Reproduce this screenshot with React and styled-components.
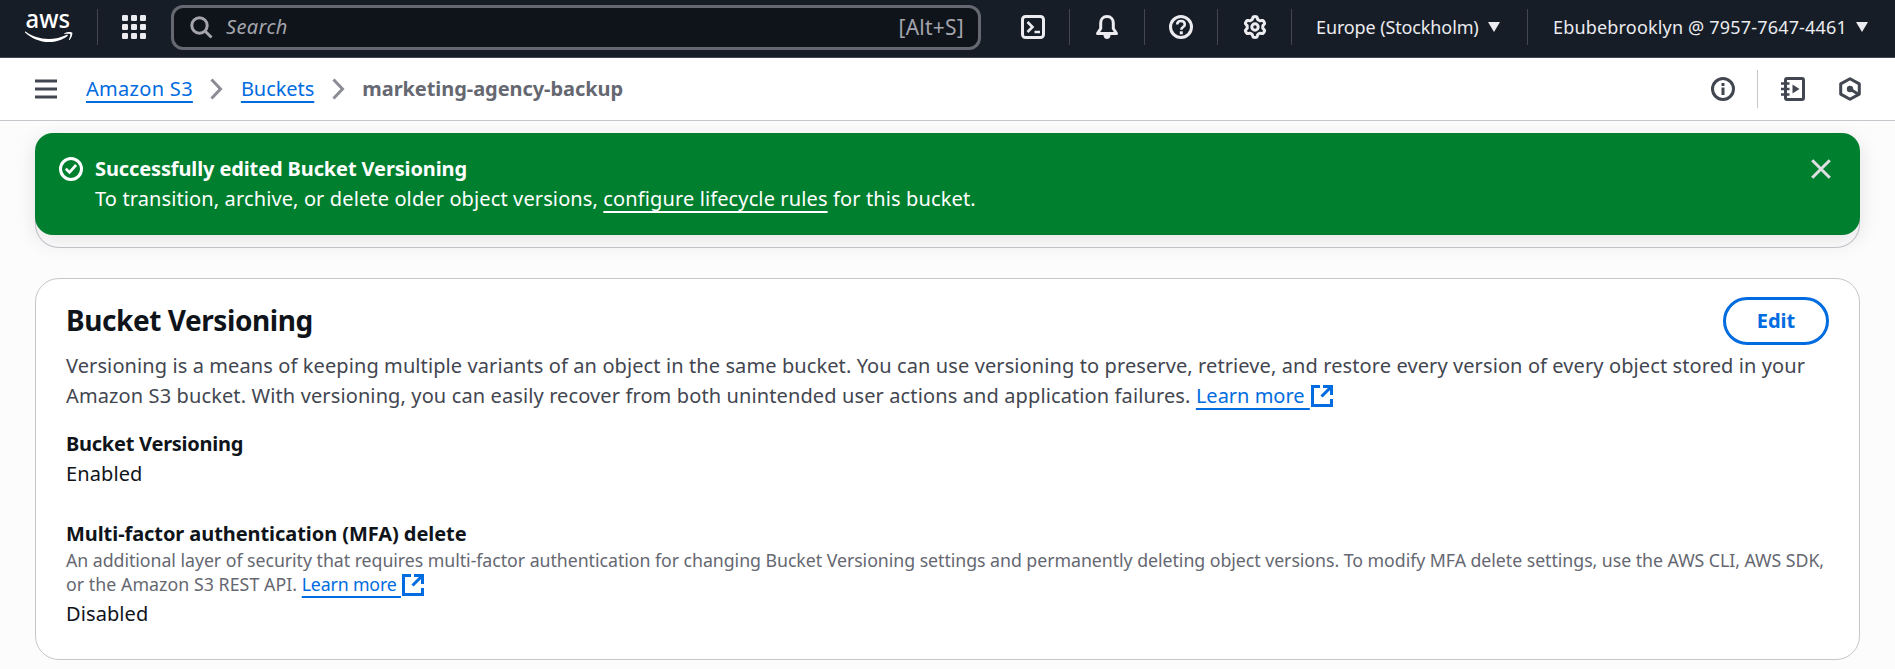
import React from "react";
import styled, { createGlobalStyle } from "styled-components";

const color = {
  navy: "#161d26",
  ink: "#0f141a",
  body: "#424650",
  muted: "#656871",
  line: "#c6c6cd",
  link: "#006ce0",
  light: "#ebebf0",
  page: "#fcfcfd",
  success: "#00802f",
};

const GlobalStyle = createGlobalStyle`
  *, *::before, *::after { box-sizing: border-box; }
  body {
    margin: 0;
    background: ${color.page};
    color: ${color.ink};
    font: 400 20px/30px "Noto Sans", "Open Sans", sans-serif;
    letter-spacing: 0.1px;
    overflow: hidden;
  }
  h2, p { margin: 0; }
  button { font: inherit; color: inherit; background: none; border: 0; padding: 0; }
`;

const Page = styled.div`
  display: flex;
  flex-direction: column;
  height: 669px;
  overflow: hidden;
`;

/* ---------- global navigation ---------- */

const TopNav = styled.header`
  display: flex;
  align-items: flex-start;
  flex: none;
  height: 58px;
  background: ${color.navy};
  border-bottom: 1px solid #424650;
  color: ${color.light};
`;

const NavCell = styled.div`
  display: flex;
  align-items: center;
  justify-content: ${(p) => (p.$start ? "flex-start" : "center")};
  flex: none;
  width: ${(p) => p.$width}px;
  height: 36px;
  margin-top: 9px;
  padding-left: ${(p) => p.$start || 0}px;
  border-right: ${(p) => (p.$last ? "0" : `1px solid #424650`)};
`;

const SearchBox = styled.div`
  display: flex;
  align-items: center;
  flex: none;
  width: 810px;
  height: 45px;
  margin: 5px 16px 0 0;
  padding: 0 14px 0 16px;
  border: 3px solid ${color.muted};
  border-radius: 12px;
  background: ${color.ink};
  color: #a4a4ad;
`;

const Placeholder = styled.span`
  flex: 1;
  margin-left: 13px;
  font-style: italic;
  letter-spacing: 0.35px;
  line-height: 36px;
  padding-bottom: 2px;
`;

const Shortcut = styled.span`
  font-size: 21px;
  letter-spacing: 0.25px;
  padding-bottom: 2px;
`;

const NavLabel = styled.span`
  font-size: 18px;
  line-height: 34px;
  padding-bottom: 1px;
  white-space: nowrap;
  letter-spacing: ${(p) => p.$track}px;
  color: ${color.light};
`;

const Caret = styled.span`
  width: 0;
  height: 0;
  margin-left: ${(p) => p.$gap}px;
  border-left: 6px solid transparent;
  border-right: 6px solid transparent;
  border-top: 10px solid ${color.light};
`;

/* ---------- breadcrumb bar ---------- */

const CrumbBar = styled.nav`
  display: flex;
  align-items: center;
  flex: none;
  height: 63px;
  padding: 0 33px 0 35px;
  background: #fff;
  border-bottom: 1px solid ${color.line};
  color: ${color.body};
`;

const Crumbs = styled.div`
  display: flex;
  align-items: center;
  flex: 1;
  margin-left: 29px;
`;

const Link = styled.a`
  color: ${(p) => (p.$onDark ? "#fff" : color.link)};
  text-decoration: underline;
  text-decoration-thickness: 2px;
  text-underline-offset: 5px;
  text-decoration-skip-ink: none;
  letter-spacing: ${(p) => p.$track ?? 0.1}px;
  white-space: pre;
`;

const CurrentCrumb = styled.span`
  font-weight: 700;
  letter-spacing: -0.06px;
  color: ${color.muted};
`;

const Chevron = styled.svg`
  width: 13px;
  height: 22px;
  margin: 0 17.5px;
  fill: none;
  stroke: #8c8c94;
  stroke-width: 3;
`;

const Tools = styled.div`
  display: flex;
  align-items: center;
`;

const ToolDivider = styled.span`
  width: 1px;
  height: 38px;
  margin: 0 23px 0 22px;
  background: ${color.line};
`;

/* ---------- icons ---------- */

const Icon = styled.svg`
  display: block;
  flex: none;
  width: ${(p) => p.$size || 24}px;
  height: ${(p) => p.$size || 24}px;
  margin-left: ${(p) => p.$gap || 0}px;
  fill: none;
  stroke: currentColor;
  stroke-width: 3;
`;

const Logo = styled.svg`
  display: block;
  width: 52px;
  height: 46px;
  margin-top: -12px;
  fill: #fff;
`;

const LogoText = styled.text`
  font: 500 26px "Noto Sans", sans-serif;
  letter-spacing: 0;
`;

const InlineIcon = styled.svg`
  width: 22px;
  height: 22px;
  margin-left: 1px;
  vertical-align: ${(p) => p.$shift}px;
  fill: none;
  stroke: ${color.link};
  stroke-width: 3;
`;

/* ---------- content ---------- */

const Content = styled.main`
  display: flex;
  flex-direction: column;
  padding: 12px 35px 0;
`;

const Flash = styled.section`
  display: flex;
  align-items: flex-start;
  position: relative;
  z-index: 1;
  height: 102px;
  padding: 21px 29px 0 24px;
  border-radius: 18px;
  background: ${color.success};
  box-shadow: 0 6px 20px 1px rgba(0, 7, 22, 0.1);
  color: #fff;
`;

const FlashText = styled.div`
  flex: 1;
  margin-left: 12px;
`;

const FlashTitle = styled.div`
  font-weight: 700;
  letter-spacing: -0.12px;
`;

const FlashIcon = styled.span`
  display: flex;
  padding-top: ${(p) => p.$top}px;
  color: ${(p) => p.$tone};
`;

const PreviousPanel = styled.div`
  height: 50px;
  margin-top: -37px;
  border: 1px solid ${color.line};
  border-top: 0;
  border-radius: 0 0 24px 24px;
  background: #fff;
`;

const Panel = styled.section`
  height: 382px;
  margin-top: 30px;
  padding: 18px 30px 0;
  border: 1px solid ${color.line};
  border-radius: 24px;
  background: #fff;
`;

const PanelHead = styled.div`
  display: flex;
  align-items: flex-start;
  justify-content: space-between;
  height: 48px;
`;

const Title = styled.h2`
  padding-top: 5px;
  font-size: 28px;
  line-height: 36px;
  font-weight: 700;
  letter-spacing: -0.43px;
`;

const EditButton = styled.button`
  width: 106px;
  height: 48px;
  border: 3px solid ${color.link};
  border-radius: 24px;
  color: ${color.link};
  font-weight: 700;
`;

const Description = styled.p`
  margin-top: 6px;
  color: ${color.body};
  white-space: nowrap;
`;

const Tracked = styled.span`
  letter-spacing: ${(p) => p.$track}px;
`;

const Field = styled.div`
  margin-top: ${(p) => p.$gap}px;
`;

const FieldLabel = styled.div`
  font-weight: 700;
  letter-spacing: ${(p) => p.$track}px;
`;

const FieldNote = styled.p`
  margin: -1px 0 3px;
  color: ${color.muted};
  font-size: 17.75px;
  line-height: 24px;
  letter-spacing: -0.05px;
  white-space: nowrap;
`;

const gearPath =
  Array.from({ length: 72 }, (_, i) => {
    const a = (i / 72) * Math.PI * 2;
    const wave = Math.cos(6 * a);
    const r = 9.1 + 1.35 * Math.tanh(2.2 * wave);
    return `${i ? "L" : "M"}${(12 + r * Math.sin(a)).toFixed(2)} ${(12 - r * Math.cos(a)).toFixed(2)}`;
  }).join("") + "Z";

function AwsLogo() {
  return (
    <Logo viewBox="0 -12 52 46">
      <LogoText x="1.500" y="17.500" textLength="44.500" lengthAdjust="spacingAndGlyphs">aws</LogoText>
      <path d="M1.500 21.600C8 26.300 16 29 24.600 29c6 0 12.800-1.400 18.200-4.200.8-.4 1.500.5.7 1.100C38.700 29.800 31.300 32 25 32 15.800 32 7.500 28.400 1.300 22.700c-.5-.5-.3-1.400.2-1.100z" />
      <path d="M46.200 24.200c-.6-.8-4-.4-5.600-.2-.5 0-.500-.4-.1-.7 2.700-1.900 7.200-1.400 7.700-.700.5.7-.1 5.100-2.700 7.300-.4.3-.8.100-.600-.300.6-1.500 1.900-4.700 1.300-5.400z" />
    </Logo>
  );
}

function ExternalIcon({ shift }) {
  return (
    <InlineIcon $shift={shift} viewBox="0 0 22 22">
      <path d="M9 1.500H1.500v19h19V14M12 1.500h8.500V10M20.500 1.500L10.500 11.500" />
    </InlineIcon>
  );
}

export default function App() {
  return (
    <Page>
      <GlobalStyle />
      <TopNav>
        <NavCell $width={98} $start={24}>
          <AwsLogo />
        </NavCell>
        <NavCell $width={73} $start={24} $last>
          <Icon viewBox="0 0 24 24">
            {[0, 9, 18].map((y) =>
              [0, 9, 18].map((x) => (
                <rect key={`${x}-${y}`} x={x} y={y} width="6" height="6" rx="1.2" fill="currentColor" stroke="none" />
              ))
            )}
          </Icon>
        </NavCell>
        <SearchBox>
          <Icon $size={23} viewBox="0 0 23 23">
            <circle cx="9.500" cy="9.500" r="7.700" />
            <path d="M15 15l6.500 6.500" />
          </Icon>
          <Placeholder>Search</Placeholder>
          <Shortcut>[Alt+S]</Shortcut>
        </SearchBox>
        <NavCell $width={73}>
          <Icon viewBox="0 0 24 24">
            <rect x="1.500" y="1.500" width="21" height="21" rx="3" />
            <path d="M6.500 7l5 5-5 5M13.500 17H19" strokeWidth="2.600" />
          </Icon>
        </NavCell>
        <NavCell $width={75} $start={25}>
          <Icon viewBox="0 0 24 24">
            <path d="M12 1.500c-4 0-6.300 3-6.300 6.500v5.500L2.500 18.500h19L18.300 13.500V8c0-3.500-2.300-6.500-6.300-6.500z" strokeLinejoin="round" />
            <path d="M8.500 20h7c0 2.500-1.500 4-3.500 4s-3.500-1.500-3.500-4z" fill="currentColor" stroke="none" />
          </Icon>
        </NavCell>
        <NavCell $width={73}>
          <Icon viewBox="0 0 24 24">
            <circle cx="12" cy="12" r="10.500" />
            <path d="M8.200 9.600C8.200 7.300 9.800 6 12 6s3.800 1.300 3.800 3.400c0 2.600-3.500 2.700-3.500 5.300" strokeWidth="2.600" />
            <rect x="10.800" y="16.300" width="3" height="3" fill="currentColor" stroke="none" />
          </Icon>
        </NavCell>
        <NavCell $width={74}>
          <Icon viewBox="0 0 24 24">
            <path d={gearPath} strokeLinejoin="round" />
            <circle cx="12" cy="12" r="3.200" />
          </Icon>
        </NavCell>
        <NavCell $width={236} $start={24}>
          <NavLabel $track={-0.12}>Europe (Stockholm)</NavLabel>
          <Caret $gap={9} />
        </NavCell>
        <NavCell $width={367} $start={25} $last>
          <NavLabel $track={0.18}>Ebubebrooklyn @ 7957-7647-4461</NavLabel>
          <Caret $gap={9} />
        </NavCell>
      </TopNav>

      <CrumbBar>
        <Icon $size={22} viewBox="0 0 22 22">
          <path d="M0 3h22M0 11h22M0 19h22" />
        </Icon>
        <Crumbs>
          <Link $track={0.3}>Amazon S3</Link>
          <Chevron viewBox="0 0 13 22"><path d="M1.500 1.500l9 9.500-9 9.500" /></Chevron>
          <Link $track={-0.05}>Buckets</Link>
          <Chevron viewBox="0 0 13 22"><path d="M1.500 1.500l9 9.500-9 9.500" /></Chevron>
          <CurrentCrumb>marketing-agency-backup</CurrentCrumb>
        </Crumbs>
        <Tools>
          <Icon viewBox="0 0 24 24">
            <circle cx="12" cy="12" r="10.500" />
            <path d="M12 10.500v7.500M12 6v3" />
          </Icon>
          <ToolDivider />
          <Icon viewBox="0 0 24 24">
            <path d="M4.500 5V3a1.500 1.500 0 0 1 1.500-1.500h15a1.500 1.500 0 0 1 1.500 1.500v18a1.500 1.500 0 0 1-1.500 1.500H6A1.500 1.500 0 0 1 4.500 21V5" />
            <path d="M0 6.500h8.500M0 12h8.500M0 17.500h8.500" strokeWidth="2.600" />
            <path d="M11.500 7.500v9l7-4.500z" fill="currentColor" stroke="none" />
          </Icon>
          <Icon $gap={33} viewBox="0 0 24 24">
            <path d="M12 1.700l9.300 5.200v10.200L12 22.300l-9.300-5.200V6.900z" strokeLinejoin="round" />
            <circle cx="12" cy="12" r="3.200" fill="currentColor" stroke="none" />
            <path d="M12 12l8 5" />
          </Icon>
        </Tools>
      </CrumbBar>

      <Content>
        <Flash>
          <FlashIcon $top={3} $tone="#fff">
            <Icon viewBox="0 0 24 24">
              <circle cx="12" cy="12" r="10.500" />
              <path d="M6.800 11.800l3.700 3.600 6.600-7.400" strokeWidth="2.700" />
            </Icon>
          </FlashIcon>
          <FlashText>
            <FlashTitle>Successfully edited Bucket Versioning</FlashTitle>
            <p>
              <Tracked $track={0.12}>To transition, archive, or delete older object versions, </Tracked>
              <Link $onDark $track={0.12}>configure lifecycle rules</Link>
              <Tracked $track={0.13}> for this bucket.</Tracked>
            </p>
          </FlashText>
          <FlashIcon $top={5} $tone="#dedee3">
            <Icon $size={20} viewBox="0 0 20 20">
              <path d="M1.200 1.200l17.600 17.600M18.800 1.200L1.200 18.800" />
            </Icon>
          </FlashIcon>
        </Flash>
        <PreviousPanel />
        <Panel>
          <PanelHead>
            <Title>Bucket Versioning</Title>
            <EditButton>Edit</EditButton>
          </PanelHead>
          <Description>
            Versioning is a means of keeping multiple variants of an object in the same bucket. You can use versioning
            to preserve, retrieve, and restore every version of every object stored in your
            <br />
            <Tracked $track={0.118}>
              Amazon S3 bucket. With versioning, you can easily recover from both unintended user actions and
              application failures.{" "}
            </Tracked>
            <Link $track={0}>{"Learn more\u00a0"}</Link>
            <ExternalIcon shift={-4} />
          </Description>
          <Field $gap={18}>
            <FieldLabel $track={-0.25}>Bucket Versioning</FieldLabel>
            <div>Enabled</div>
          </Field>
          <Field $gap={30}>
            <FieldLabel $track={-0.07}>Multi-factor authentication (MFA) delete</FieldLabel>
            <FieldNote>
              An additional layer of security that requires multi-factor authentication for changing Bucket Versioning
              settings and permanently deleting object versions. To modify MFA delete settings, use the AWS CLI, AWS SDK,
              <br />
              <Tracked $track={0.05}>or the Amazon S3 REST API. </Tracked>
              <Link $track={-0.17}>{"Learn more\u00a0"}</Link>
              <ExternalIcon shift={-5} />
            </FieldNote>
            <div>Disabled</div>
          </Field>
        </Panel>
      </Content>
    </Page>
  );
}
